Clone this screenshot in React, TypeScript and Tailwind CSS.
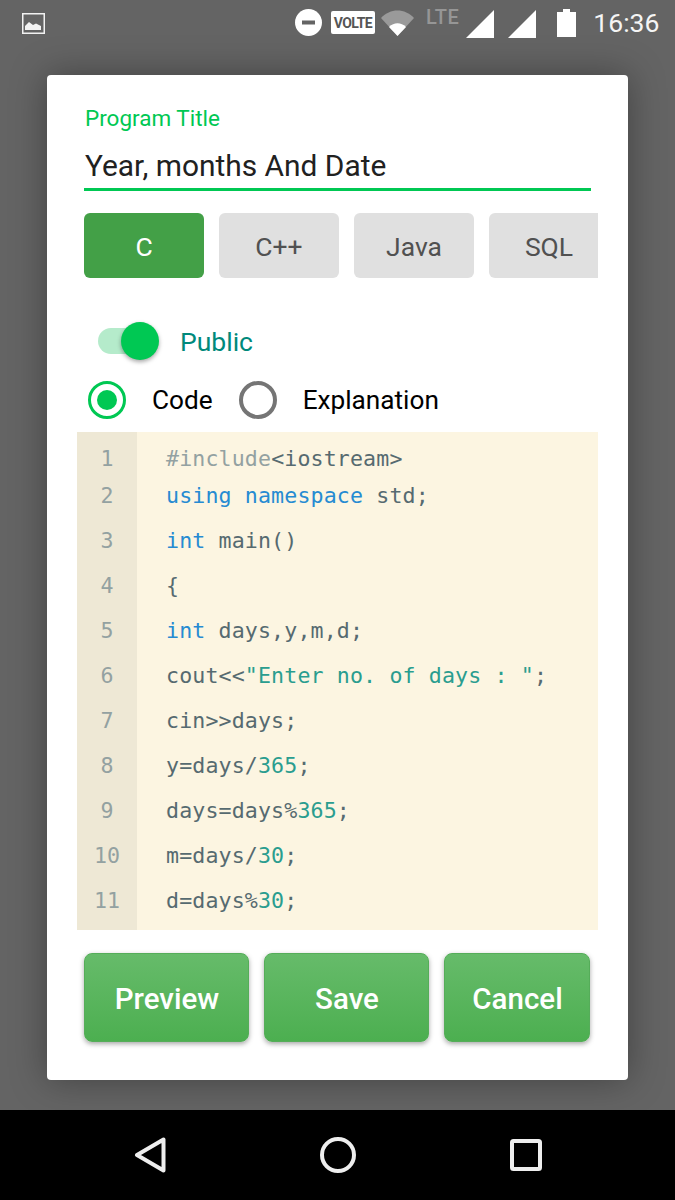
const CODE_LINES: { n: number; parts: [string, string][] }[] = [
  { n: 1, parts: [['#include', 'text-[#93a1a1]'], ['<iostream>', 'text-[#566a70]']] },
  { n: 2, parts: [['using namespace', 'text-[#268bd2]'], [' std;', 'text-[#566a70]']] },
  { n: 3, parts: [['int', 'text-[#268bd2]'], [' main()', 'text-[#566a70]']] },
  { n: 4, parts: [['{', 'text-[#566a70]']] },
  { n: 5, parts: [['int', 'text-[#268bd2]'], [' days,y,m,d;', 'text-[#566a70]']] },
  { n: 6, parts: [['cout<<', 'text-[#566a70]'], ['"Enter no. of days : "', 'text-[#2a9d8f]'], [';', 'text-[#566a70]']] },
  { n: 7, parts: [['cin>>days;', 'text-[#566a70]']] },
  { n: 8, parts: [['y=days/', 'text-[#566a70]'], ['365', 'text-[#2a9d8f]'], [';', 'text-[#566a70]']] },
  { n: 9, parts: [['days=days%', 'text-[#566a70]'], ['365', 'text-[#2a9d8f]'], [';', 'text-[#566a70]']] },
  { n: 10, parts: [['m=days/', 'text-[#566a70]'], ['30', 'text-[#2a9d8f]'], [';', 'text-[#566a70]']] },
  { n: 11, parts: [['d=days%', 'text-[#566a70]'], ['30', 'text-[#2a9d8f]'], [';', 'text-[#566a70]']] },
]

function StatusBar() {
  return (
    <div className="flex h-[45px] items-center pl-[22px] mb-[30px] text-white">
      <svg width="23" height="21" viewBox="0 0 23 21" className="mt-[1px]">
        <rect x="0.75" y="0.75" width="21.5" height="19.5" fill="none" stroke="#f2f2f2" strokeWidth="1.5" />
        <path d="M3 17 L3 13 L7 9 L11 12 L14 10.5 L19 13 L19 17 Z" fill="#f2f2f2" />
      </svg>
      <svg width="27" height="27" viewBox="0 0 27 27" className="ml-[250px]">
        <circle cx="13.5" cy="13.5" r="13.5" fill="#fff" />
        <rect x="7" y="11.5" width="13" height="4" fill="#646464" />
      </svg>
      <div className="ml-[9px] flex h-[23px] w-[44px] items-center justify-center rounded-[2px] bg-white text-[14px] font-bold leading-none tracking-[-0.6px] text-[#555]">
        VOLTE
      </div>
      <svg width="33" height="26" viewBox="0 0 33 26" className="ml-[6px]">
        <path d="M0 8 C9 -2 24 -2 33 8 L16.5 26 Z" fill="#9a9a9a" />
        <path d="M8 17 C13 12 20 12 25 17 L16.5 26 Z" fill="#fff" />
      </svg>
      <div className="ml-[12px] mb-[12px] text-[20px] font-medium leading-none tracking-[0.5px] text-[#969696]">LTE</div>
      <svg width="28" height="28" viewBox="0 0 28 28" className="ml-[7px] mt-[2px]">
        <path d="M28 0 V28 H0 Z" fill="#fff" />
      </svg>
      <svg width="28" height="28" viewBox="0 0 28 28" className="ml-[14px] mt-[2px]">
        <path d="M28 0 V28 H0 Z" fill="#fff" />
      </svg>
      <svg width="19" height="28" viewBox="0 0 19 28" className="ml-[21px]">
        <path d="M6 0 H13 V3 H19 V28 H0 V3 H6 Z" fill="#fff" />
      </svg>
      <div className="ml-[17px] mt-[2px] text-[26.5px] leading-none text-[#f5f5f5]">16:36</div>
    </div>
  )
}

function Tab({ label, active }: { label: string; active?: boolean }) {
  return (
    <div
      className={
        active
          ? 'flex h-[65px] w-[120px] shrink-0 items-center justify-center rounded-[6px] bg-[#43a047] pt-[2px] text-[26.5px] text-white'
          : 'flex h-[65px] w-[120px] shrink-0 items-center justify-center rounded-[6px] bg-[#e0e0e0] pt-[2px] text-[26.5px] text-[#515151]'
      }
    >
      {label}
    </div>
  )
}

function ActionButton({ label, width }: { label: string; width: string }) {
  return (
    <div
      className={`flex h-[89px] items-center justify-center rounded-[8px] border border-[#55ad59] bg-gradient-to-b from-[#66bb6a] to-[#4caf50] pl-[1px] pt-[3px] text-[29.5px] font-medium text-white shadow-[0_2px_5px_rgba(0,0,0,0.35)] ${width}`}
    >
      {label}
    </div>
  )
}

export default function App() {
  return (
    <div className="flex h-[1200px] w-[675px] flex-col overflow-hidden bg-[#646464] font-['Roboto',sans-serif]">
      <StatusBar />

      <div className="ml-[47px] h-[1005px] w-[581px] rounded-[4px] bg-white shadow-[0_0_36px_rgba(0,0,0,0.35)]">
        <div className="ml-[38px] mt-[30px] text-[22.5px] leading-[26px] text-[#00c853]">Program Title</div>
        <div className="ml-[37px] mr-[37px] mt-[3px] h-[57px] border-b-[3px] border-[#00c853] pl-[1px] pt-[10px] text-[29.9px] leading-[44px] text-[#212121]">
          Year, months And Date
        </div>

        <div className="ml-[37px] mt-[22px] flex w-[514px] gap-[15px] overflow-hidden">
          <Tab label="C" active />
          <Tab label="C++" />
          <Tab label="Java" />
          <Tab label="SQL" />
        </div>

        <div className="ml-[51px] mt-[43px] flex h-[40px] items-center">
          <div className="relative h-[26px] w-[52px] rounded-full bg-[#b5ebcb]">
            <div className="absolute left-[23px] top-[-6px] size-[38px] rounded-full bg-[#00c853] shadow-[0_2px_4px_rgba(0,0,0,0.35)]" />
          </div>
          <span className="ml-[30px] pt-[2px] text-[26.5px] text-[#00897b]">Public</span>
        </div>

        <div className="ml-[41px] mt-[20px] flex h-[38px] items-center text-[26.2px] text-black">
          <div className="flex size-[38px] items-center justify-center rounded-full border-[3.5px] border-[#00c853]">
            <div className="size-[20px] rounded-full bg-[#00c853]" />
          </div>
          <span className="ml-[26px] pt-[2px]">Code</span>
          <div className="ml-[26px] size-[38px] rounded-full border-[4px] border-[#757575]" />
          <span className="ml-[26px] pt-[2px]">Explanation</span>
        </div>

        <div className="ml-[30px] mt-[13px] flex h-[498px] w-[521px] bg-[#fcf5e1] font-['DejaVu_Sans_Mono',monospace] text-[21.6px]">
          <div className="w-[60px] shrink-0 bg-[#eee8d5] pt-[8px] text-center text-[#93a1a1]">
            {CODE_LINES.map((line) => (
              <div key={line.n} className={line.n === 1 ? 'h-[37px] leading-[37px]' : 'h-[45px] leading-[37px]'}>
                {line.n}
              </div>
            ))}
          </div>
          <div className="pl-[29px] pt-[8px] tracking-[0.14px]">
            {CODE_LINES.map((line) => (
              <div key={line.n} className={line.n === 1 ? 'h-[37px] whitespace-pre leading-[37px]' : 'h-[45px] whitespace-pre leading-[37px]'}>
                {line.parts.map(([text, color], i) => (
                  <span key={i} className={color}>
                    {text}
                  </span>
                ))}
              </div>
            ))}
          </div>
        </div>

        <div className="ml-[37px] mt-[23px] flex gap-[15px]">
          <ActionButton label="Preview" width="w-[165px]" />
          <ActionButton label="Save" width="w-[165px]" />
          <ActionButton label="Cancel" width="w-[146px]" />
        </div>
      </div>

      <div className="mt-auto flex h-[90px] items-center bg-black pb-[1px] pl-[134px]">
        <svg width="32" height="36" viewBox="0 0 32 36">
          <path d="M29.5 2.5 V33.5 L3 18 Z" fill="none" stroke="#eeeeee" strokeWidth="4" strokeLinejoin="round" />
        </svg>
        <svg width="36" height="36" viewBox="0 0 36 36" className="ml-[154px]">
          <circle cx="18" cy="18" r="16" fill="none" stroke="#eeeeee" strokeWidth="4" />
        </svg>
        <svg width="32" height="32" viewBox="0 0 32 32" className="ml-[154px]">
          <rect x="2" y="2" width="28" height="28" rx="1.5" fill="none" stroke="#eeeeee" strokeWidth="4" />
        </svg>
      </div>
    </div>
  )
}
